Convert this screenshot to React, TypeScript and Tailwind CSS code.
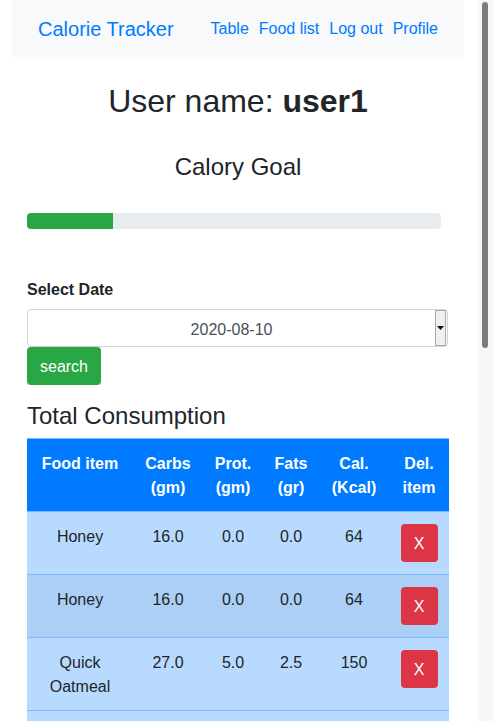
import React from "react";

const rows = [
  { name: "Honey", carbs: "16.0", prot: "0.0", fats: "0.0", cal: "64" },
  { name: "Honey", carbs: "16.0", prot: "0.0", fats: "0.0", cal: "64", hover: true },
  { name: "Quick Oatmeal", carbs: "27.0", prot: "5.0", fats: "2.5", cal: "150" },
];

export default function App() {
  return (
    <div className="h-screen overflow-hidden bg-white font-['Liberation_Sans',Arial,sans-serif] text-[#212529]">
      <div className="w-[478px]">
        <div className="ml-[12px] w-[452px]">
          {/* navbar */}
          <nav className="flex h-[57px] items-center justify-between bg-[#f8f9fa] px-[26px]">
            <a className="text-[20px] leading-[30px] text-[#007bff]">Calorie Tracker</a>
            <div className="flex gap-[10px] text-[16px] leading-6 text-[#007bff]">
              <a>Table</a>
              <a>Food list</a>
              <a>Log out</a>
              <a>Profile</a>
            </div>
          </nav>

          <div className="px-[15px]">
            <h2 className="mt-[25px] text-center text-[32px] leading-[38px]">
              User name: <b>user1</b>
            </h2>
            <h4 className="mt-[31px] pt-[1px] text-center text-[24px] leading-[29px]">Calory Goal</h4>

            <div className="mt-[32px] h-4 w-[414px] overflow-hidden rounded-[4px] bg-[#e9ecef]">
              <div className="h-full bg-[#28a745]" style={{ width: "20.8%" }} />
            </div>

            <label className="mt-[48px] block pt-[1px] text-[16px] font-bold leading-6">Select Date</label>
            <div className="mt-[7px] flex h-[38px] w-[421px] items-center rounded-[4px] border border-[#ced4da] bg-white">
              <span className="flex-1 pt-[3px] text-center text-[16px] text-[#495057]">2020-08-10</span>
              <div className="mr-[1px] flex h-[36px] w-[11px] items-center justify-center border border-[#a9a9a9] bg-[#f0f0f0]">
                <svg width="7" height="4" viewBox="0 0 7 4">
                  <path d="M0 0h7L3.5 4z" fill="#111" />
                </svg>
              </div>
            </div>
            <button className="h-[38px] w-[74px] rounded-[4px] bg-[#28a745] pt-[1px] text-[16px] text-white">search</button>

            <h4 className="mt-[16px] text-[24px] leading-[29px]">Total Consumption</h4>

            <table className="mt-2 w-[422px] table-fixed border-collapse text-[16px] leading-6">
              <colgroup>
                <col className="w-[106px]" />
                <col className="w-[70px]" />
                <col className="w-[60px]" />
                <col className="w-[56px]" />
                <col className="w-[70px]" />
                <col className="w-[60px]" />
              </colgroup>
              <thead>
                <tr className="bg-[#007bff] text-white">
                  <th className="border-t border-[#7abaff] px-1 pb-[11px] pt-[13px] align-top font-bold">Food item</th>
                  <th className="border-t border-[#7abaff] px-1 pb-[11px] pt-[13px] align-top font-bold">Carbs (gm)</th>
                  <th className="border-t border-[#7abaff] px-1 pb-[11px] pt-[13px] align-top font-bold">Prot. (gm)</th>
                  <th className="border-t border-[#7abaff] px-1 pb-[11px] pt-[13px] align-top font-bold">Fats (gr)</th>
                  <th className="border-t border-[#7abaff] px-1 pb-[11px] pt-[13px] align-top font-bold">Cal. (Kcal)</th>
                  <th className="border-t border-[#7abaff] px-1 pb-[11px] pt-[13px] align-top font-bold">Del. item</th>
                </tr>
              </thead>
              <tbody>
                {rows.map((r, i) => (
                  <tr key={i} className={r.hover ? "bg-[#abcff5]" : "bg-[#b8daff]"}>
                    <td className="border-t border-[#7abaff] px-3 pb-[11px] pt-[13px] text-center align-top">{r.name}</td>
                    <td className="border-t border-[#7abaff] pb-[11px] pt-[13px] text-center align-top">{r.carbs}</td>
                    <td className="border-t border-[#7abaff] pb-[11px] pt-[13px] text-center align-top">{r.prot}</td>
                    <td className="border-t border-[#7abaff] pb-[11px] pt-[13px] text-center align-top">{r.fats}</td>
                    <td className="border-t border-[#7abaff] pb-[11px] pt-[13px] text-center align-top">{r.cal}</td>
                    <td className="border-t border-[#7abaff] py-3 text-center align-top">
                      <button className="h-[38px] w-[37px] rounded-[4px] bg-[#dc3545] pt-[1px] text-[16px] text-white">X</button>
                    </td>
                  </tr>
                ))}
                <tr className="bg-[#b8daff]">
                  <td colSpan={6} className="h-[40px] border-t border-[#7abaff]" />
                </tr>
              </tbody>
            </table>
          </div>
        </div>
      </div>

      {/* page scrollbar */}
      <div className="fixed right-0 top-0 h-screen w-[15px] bg-[#f7f7f7] pl-[4px] pt-[2px]">
        <div className="h-[346px] w-[6px] rounded-[3px] bg-[#7b7b7b]" />
      </div>
    </div>
  );
}
